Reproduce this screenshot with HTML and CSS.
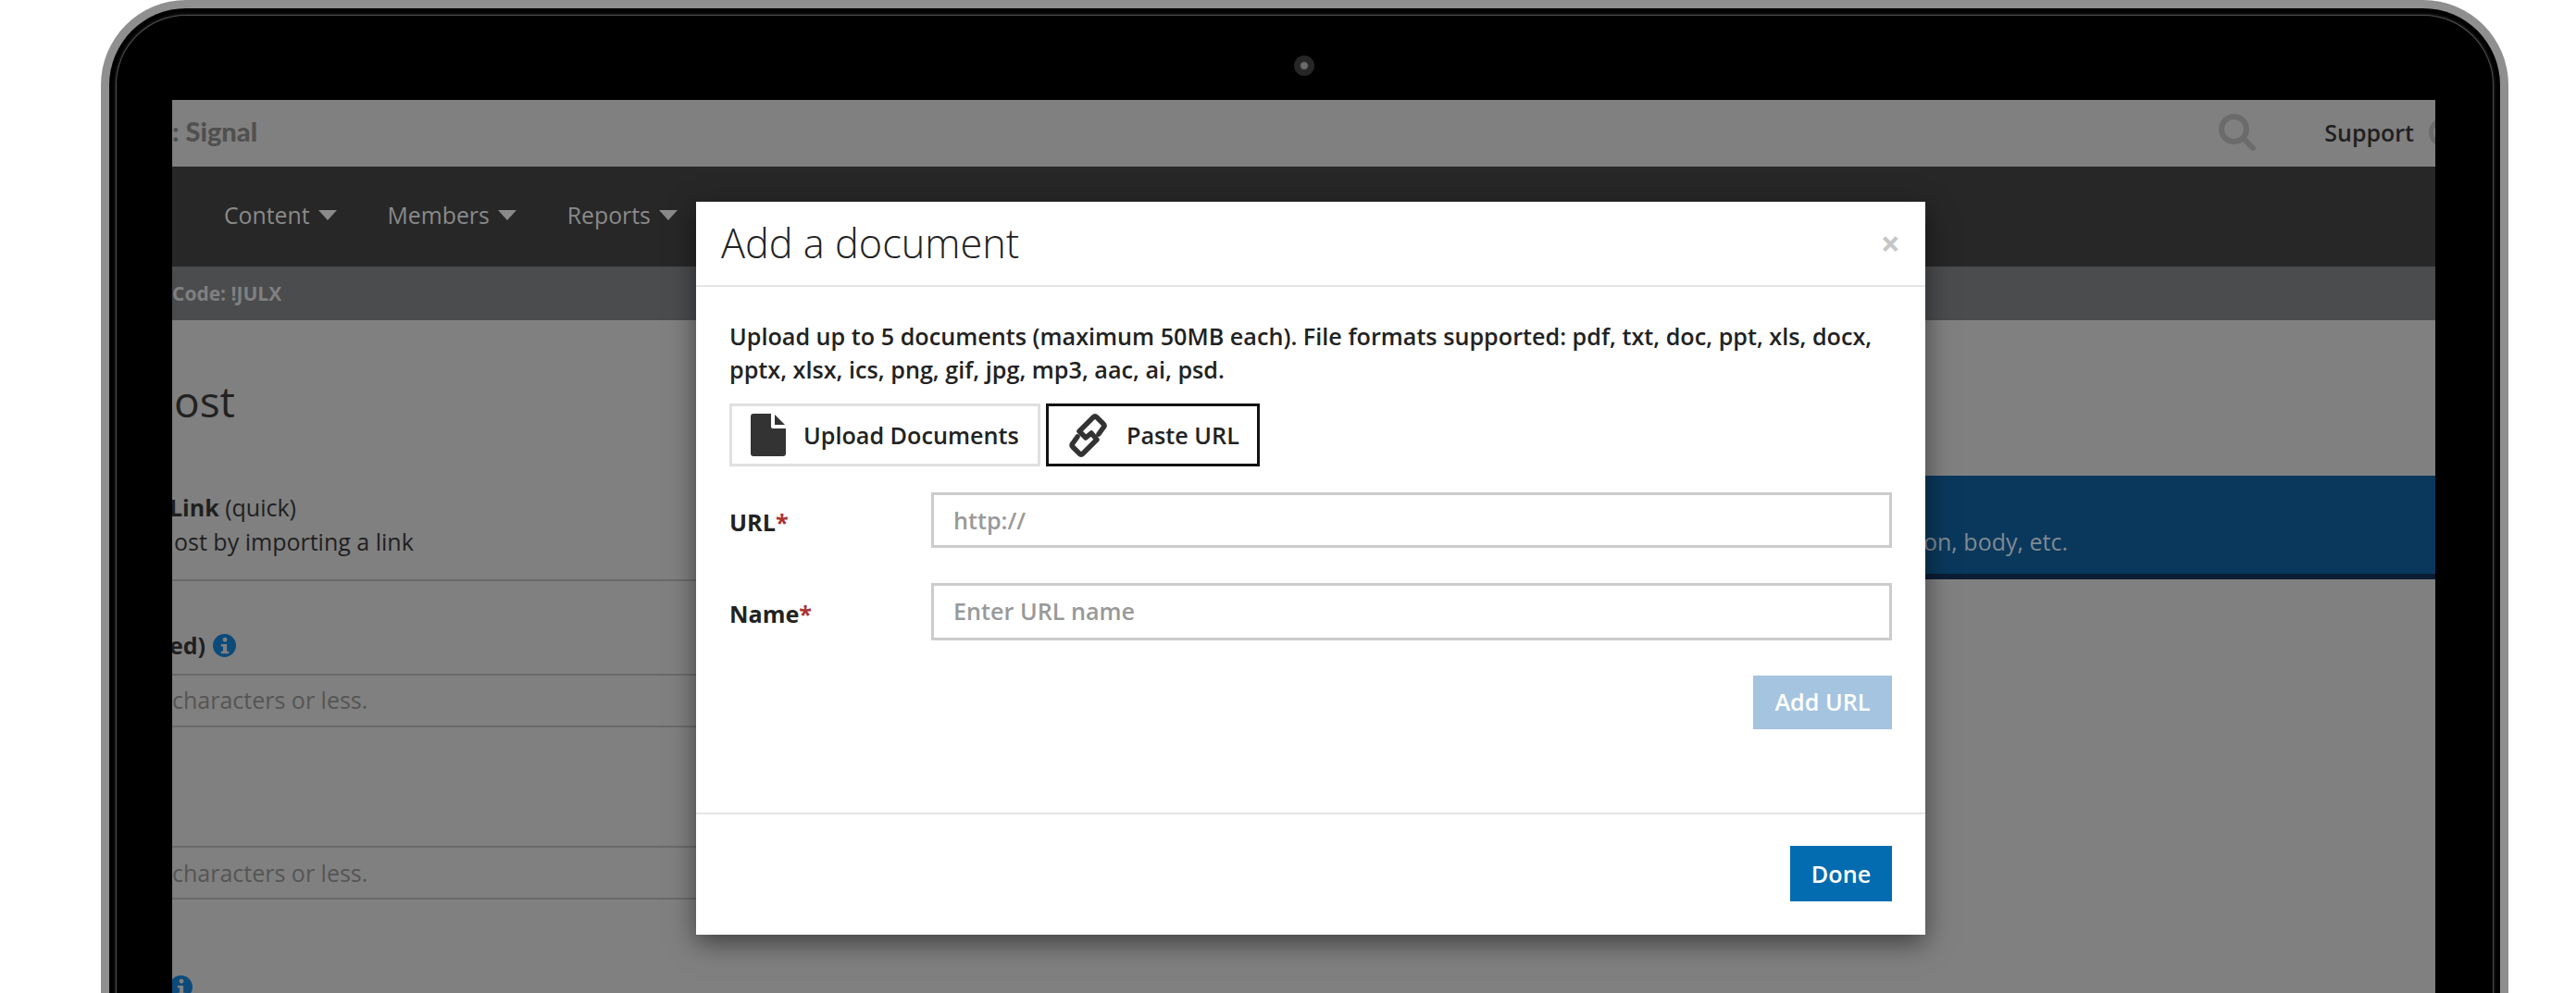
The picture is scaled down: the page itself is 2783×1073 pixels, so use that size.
FILE: index.html
```html
<!DOCTYPE html>
<html lang="en">
<head>
<meta charset="utf-8">
<title>Add a document</title>
<link rel="stylesheet" href="styles.css">
</head>
<body>
<div class="frame">
  <div class="ring">
    <div class="bezel">
      <div class="camera"></div>
      <div class="screen">
        <header class="topbar">
          <span class="brand">: Signal</span>
          <svg class="search" viewBox="0 0 40 40" aria-hidden="true"><circle cx="16.5" cy="16.500" r="13.500" fill="none" stroke="#6b6b6b" stroke-width="6"/><path d="M27 27 L37 37" stroke="#6b6b6b" stroke-width="6" stroke-linecap="round"/></svg>
          <span class="support">Support</span>
          <span class="help-ring"></span>
        </header>
        <nav class="navbar">
          <span class="nav-item">Content<i class="caret"></i></span>
          <span class="nav-item">Members<i class="caret"></i></span>
          <span class="nav-item">Reports<i class="caret"></i></span>
        </nav>
        <div class="subbar">Code: !JULX</div>
        <main class="content">
          <section class="form-col">
            <h1 class="page-title">ost</h1>
            <div class="intro">
              <p class="intro-head"><b>Link</b> (quick)</p>
              <p class="indent">ost by importing a link</p>
            </div>
            <div class="field-label"><b>ed)</b>
              <svg class="info" viewBox="0 0 24 24" aria-hidden="true"><circle cx="12" cy="12" r="12" fill="#0c4a7a"/><circle cx="12.500" cy="6" r="2.300" fill="#808080"/><path d="M8.500 10.500h6v7.500h2v2.500h-8v-2.500h2v-5h-2z" fill="#808080"/></svg>
            </div>
            <div class="ghost-input">characters or less.</div>
            <div class="ghost-input second">characters or less.</div>
            <svg class="info last" viewBox="0 0 24 24" aria-hidden="true"><circle cx="12" cy="12" r="12" fill="#0c4a7a"/><circle cx="12.500" cy="6" r="2.300" fill="#808080"/><path d="M8.500 10.500h6v7.500h2v2.500h-8v-2.500h2v-5h-2z" fill="#808080"/></svg>
          </section>
          <section class="side-col">
            <div class="blue-panel">on, body, etc.</div>
          </section>
        </main>
        <div class="modal">
          <div class="modal-head">
            <h2 class="modal-title">Add a document</h2>
            <span class="close">×</span>
          </div>
          <div class="modal-body">
            <p class="lead">Upload up to 5 documents (maximum 50MB each). File formats supported: pdf, txt, doc, ppt, xls, docx, pptx, xlsx, ics, png, gif, jpg, mp3, aac, ai, psd.</p>
            <div class="tabs">
              <button class="tab upload" type="button">
                <svg class="file-icon" viewBox="0 0 38 46" aria-hidden="true"><path d="M3 0H22V14a2 2 0 0 0 2 2H38V43a3 3 0 0 1-3 3H3a3 3 0 0 1-3-3V3a3 3 0 0 1 3-3z" fill="#333"/><path d="M26 1V12H37z" fill="#333"/></svg>
                Upload Documents
              </button>
              <button class="tab paste" type="button">
                <svg class="link-icon" viewBox="0 0 42 47" aria-hidden="true"><path d="M32 22L37 15Q39 13 37 11L30 4Q28 2 26 4L11 19L18 26L24 21L30 28L15 43Q13 45 11 43L4 36Q2 34 4 32L9 25" fill="none" stroke="#333" stroke-width="5.500" stroke-linecap="round" stroke-linejoin="round"/></svg>
                Paste URL
              </button>
            </div>
            <div class="row">
              <label class="label">URL<em>*</em></label>
              <div class="input">http://</div>
            </div>
            <div class="row name">
              <label class="label">Name<em>*</em></label>
              <div class="input">Enter URL name</div>
            </div>
            <div class="add-row"><button class="btn add" type="button">Add URL</button></div>
          </div>
          <div class="modal-foot"><button class="btn done" type="button">Done</button></div>
        </div>
      </div>
    </div>
  </div>
</div>
</body>
</html>
```
FILE: styles.css
```css
* { box-sizing: border-box; }
html, body { margin: 0; height: 100%; overflow: hidden; background: #fff; }
body { padding-left: 109px; font-family: "Open Sans", "Liberation Sans", sans-serif; color: #222; }

.frame { width: 2601px; height: 1300px; background: #8f8f8f; border-radius: 92px; padding: 9px; }
.ring { height: 100%; background: #000; border-radius: 83px; padding: 8px; }
.bezel { position: relative; height: 100%; background: #000; border-radius: 75px; padding: 91px 62px 0 60px; box-shadow: 0 0 0 1px #4e4e4e, 0 0 3px 2px #222; }
.camera { position: absolute; left: 1272px; top: 43px; width: 22px; height: 22px; border-radius: 50%; background: radial-gradient(circle, #6c6c6c 0 20%, #262626 32% 70%, #101010 100%); }

.screen { position: relative; height: 100%; overflow: hidden; background: #808080; }

.topbar { display: flex; align-items: center; height: 72px; padding-bottom: 3px; background: #808080; }
.brand { padding-bottom: 3px; font-family: Lato, sans-serif; font-weight: 900; font-size: 29px; color: #505050; }
.search { width: 40px; height: 40px; margin-left: auto; }
.support { margin-left: 74px; font-size: 25px; font-weight: 600; color: #1f1f1f; }
.help-ring { flex: none; width: 32px; height: 32px; margin: 0 -25px 0 16px; border: 5px solid #6b6b6b; border-radius: 50%; }

.navbar { display: flex; align-items: center; gap: 55px; height: 108px; padding: 0 0 4px 56px; background: #272727; }
.nav-item { display: flex; align-items: center; gap: 9px; font-size: 24.800px; color: #8a8a8a; }
.caret { width: 0; height: 0; border-left: 10px solid transparent; border-right: 10px solid transparent; border-top: 11px solid #8a8a8a; }

.subbar { display: flex; align-items: center; height: 58px; background: #4b4c4e; font-size: 21px; font-weight: 700; color: #808080; }

.content { display: grid; grid-template-columns: 1214px 1fr; }
.form-col { display: flex; flex-direction: column; }
.page-title { margin: 64px 0 0 2px; font-size: 46px; line-height: 46px; font-weight: 400; color: #222; }
.intro { margin-top: 74px; padding-bottom: 22px; border-bottom: 2px solid #6a6a6a; font-size: 25px; line-height: 37px; color: #1f1f1f; }
.intro p { margin: 0; }
.intro .intro-head { margin-left: -3px; }
.indent { padding-left: 2px; }
.field-label { display: flex; align-items: center; gap: 8px; height: 36px; margin: 51px 0 0 -3px; font-size: 25px; color: #1f1f1f; }
.info { flex: none; width: 25px; height: 25px; }
.info.last { margin: 82px 0 0 -3px; }
.ghost-input { display: flex; align-items: center; height: 58px; margin-top: 13px; padding-bottom: 2px; border-top: 2px solid #6a6a6a; border-bottom: 2px solid #6a6a6a; font-size: 25px; color: #555; }
.ghost-input.second { margin-top: 128px; padding-bottom: 0; }

.side-col { padding-top: 168px; }
.blue-panel { height: 112px; padding: 54px 0 0 678px; background: #0a385c; border-bottom: 6px solid #0c1c34; font-size: 25px; line-height: 34px; color: #808a92; }

.modal { position: absolute; left: 566px; top: 110px; display: flex; flex-direction: column; width: 1328px; height: 792px; background: #fff; box-shadow: 0 9px 27px rgba(0, 0, 0, .5); }
.modal-head { display: flex; align-items: center; justify-content: space-between; height: 92px; padding: 0 27px 2px; border-bottom: 2px solid #e5e5e5; }
.modal-title { margin: 0; font-size: 43.300px; font-weight: 300; color: #222; }
.close { font-size: 37px; font-weight: 700; line-height: 1; color: #c6c6c6; }
.modal-body { flex: 1; padding: 35px 36px 0; }
.lead { margin: 0; font-size: 25.200px; line-height: 36px; font-weight: 600; color: #222; }
.tabs { display: flex; gap: 6px; margin-top: 19px; }
.tab { display: flex; align-items: center; height: 68px; padding: 0; background: #fff; border: 3px solid #e0e0e0; font: 600 25.200px "Open Sans", sans-serif; color: #222; }
.upload { width: 336px; gap: 19px; padding-left: 20px; }
.paste { width: 231px; gap: 20px; padding-left: 22px; border-color: #111; }
.file-icon { width: 38px; height: 46px; }
.link-icon { width: 42px; height: 47px; }
.row { display: grid; grid-template-columns: 218px 1fr; align-items: center; margin-top: 28px; }
.row.name { margin-top: 38px; }
.label { padding-top: 4px; font-size: 25.200px; font-weight: 700; color: #222; }
.label em { font-style: normal; color: #a33; }
.input { display: flex; align-items: center; height: 60px; padding-left: 21px; border: 3px solid #ccc; font-size: 25.200px; font-weight: 600; color: #999; }
.row.name .input { height: 62px; padding-bottom: 2px; }
.add-row { display: flex; justify-content: flex-end; margin-top: 38px; }
.btn { height: 58px; border: 0; padding: 0 0 1px; font: 600 25.200px "Open Sans", sans-serif; color: #fff; }
.add { width: 150px; padding-bottom: 2px; background: #a4c4e0; }
.modal-foot { display: flex; justify-content: flex-end; height: 132px; padding: 34px 36px 0; border-top: 2px solid #e5e5e5; }
.done { width: 110px; height: 60px; background: #036cb0; }
```
